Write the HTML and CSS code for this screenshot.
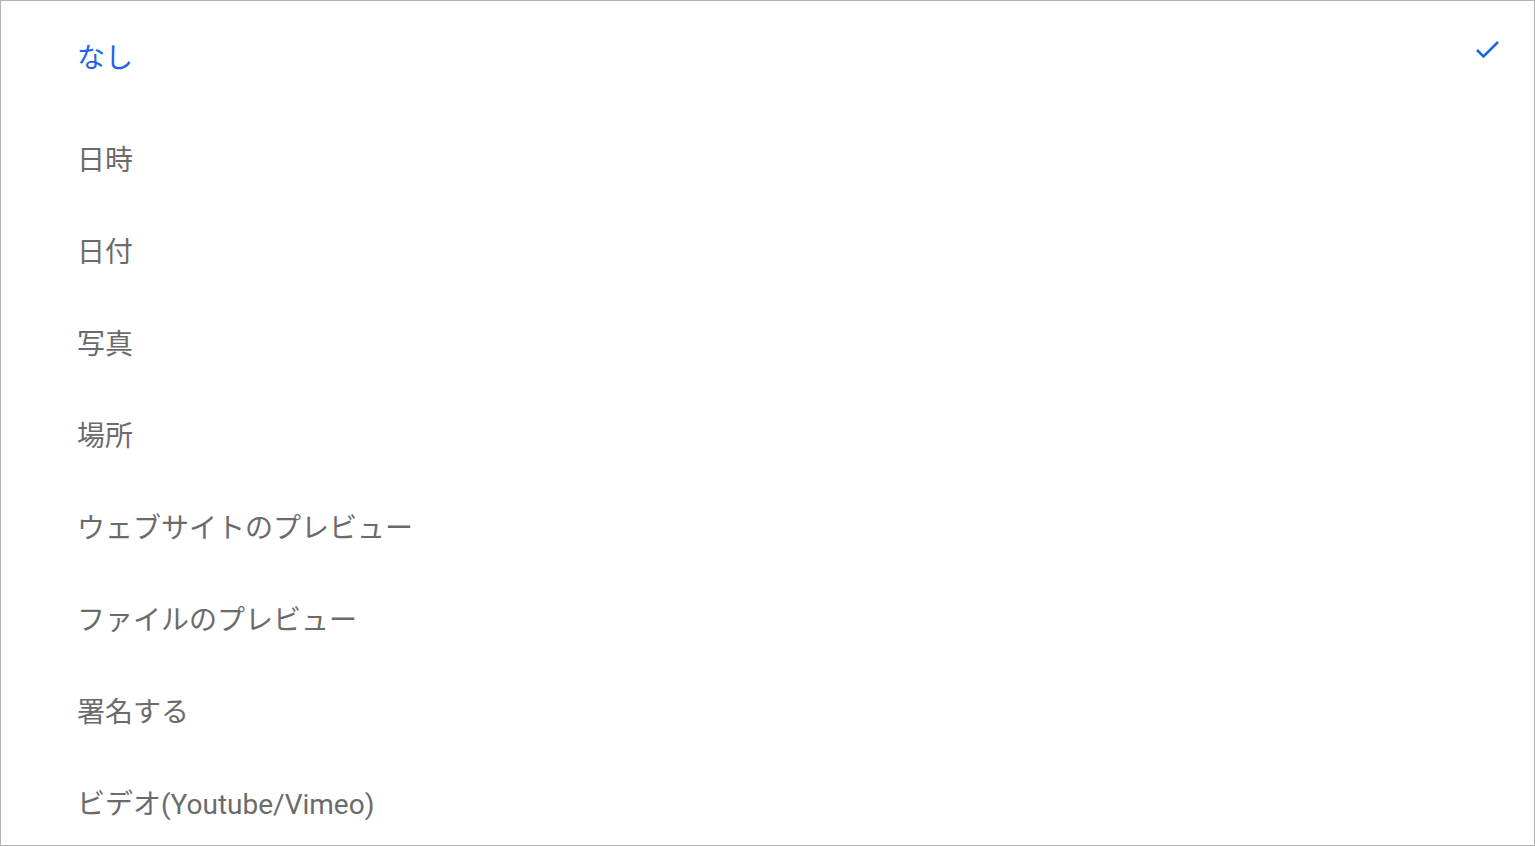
FILE: index.html
```html
<!DOCTYPE html>
<html lang="ja">
<head>
<meta charset="utf-8">
<link rel="stylesheet" href="styles.css">
</head>
<body>
<div class="panel">
  <ul class="list">
    <li class="item item-first selected"><span class="label">なし</span>
      <svg class="check" width="26" height="20" viewBox="0 0 26 20"><path d="M2 10 L8.5 16.5 L23 2" fill="none" stroke="#1a66e8" stroke-width="2.6"/></svg>
    </li>
    <li class="item"><span class="label">日時</span></li>
    <li class="item"><span class="label">日付</span></li>
    <li class="item"><span class="label">写真</span></li>
    <li class="item"><span class="label">場所</span></li>
    <li class="item"><span class="label">ウェブサイトのプレビュー</span></li>
    <li class="item"><span class="label">ファイルのプレビュー</span></li>
    <li class="item"><span class="label">署名する</span></li>
    <li class="item"><span class="label">ビデオ(Youtube/Vimeo)</span></li>
  </ul>
</div>
</body>
</html>
```
FILE: styles.css
```css
html, body {
  margin: 0;
  padding: 0;
  background: #fff;
}
.panel {
  box-sizing: border-box;
  width: 1535px;
  height: 846px;
  border: 1px solid #b3b3b3;
  overflow: hidden;
}
.list {
  list-style: none;
  margin: 0;
  padding: 0;
}
.item {
  box-sizing: border-box;
  height: 92px;
  display: flex;
  align-items: center;
  justify-content: space-between;
  padding: 0 33px 4px 76px;
  font-family: Roboto, "Noto Sans CJK JP", sans-serif;
  font-size: 28px;
  color: #6b6b6b;
}
.item-first {
  height: 113px;
}
.selected {
  color: #1a66e8;
}
.check {
  display: block;
  margin-bottom: 11px;
}
```
